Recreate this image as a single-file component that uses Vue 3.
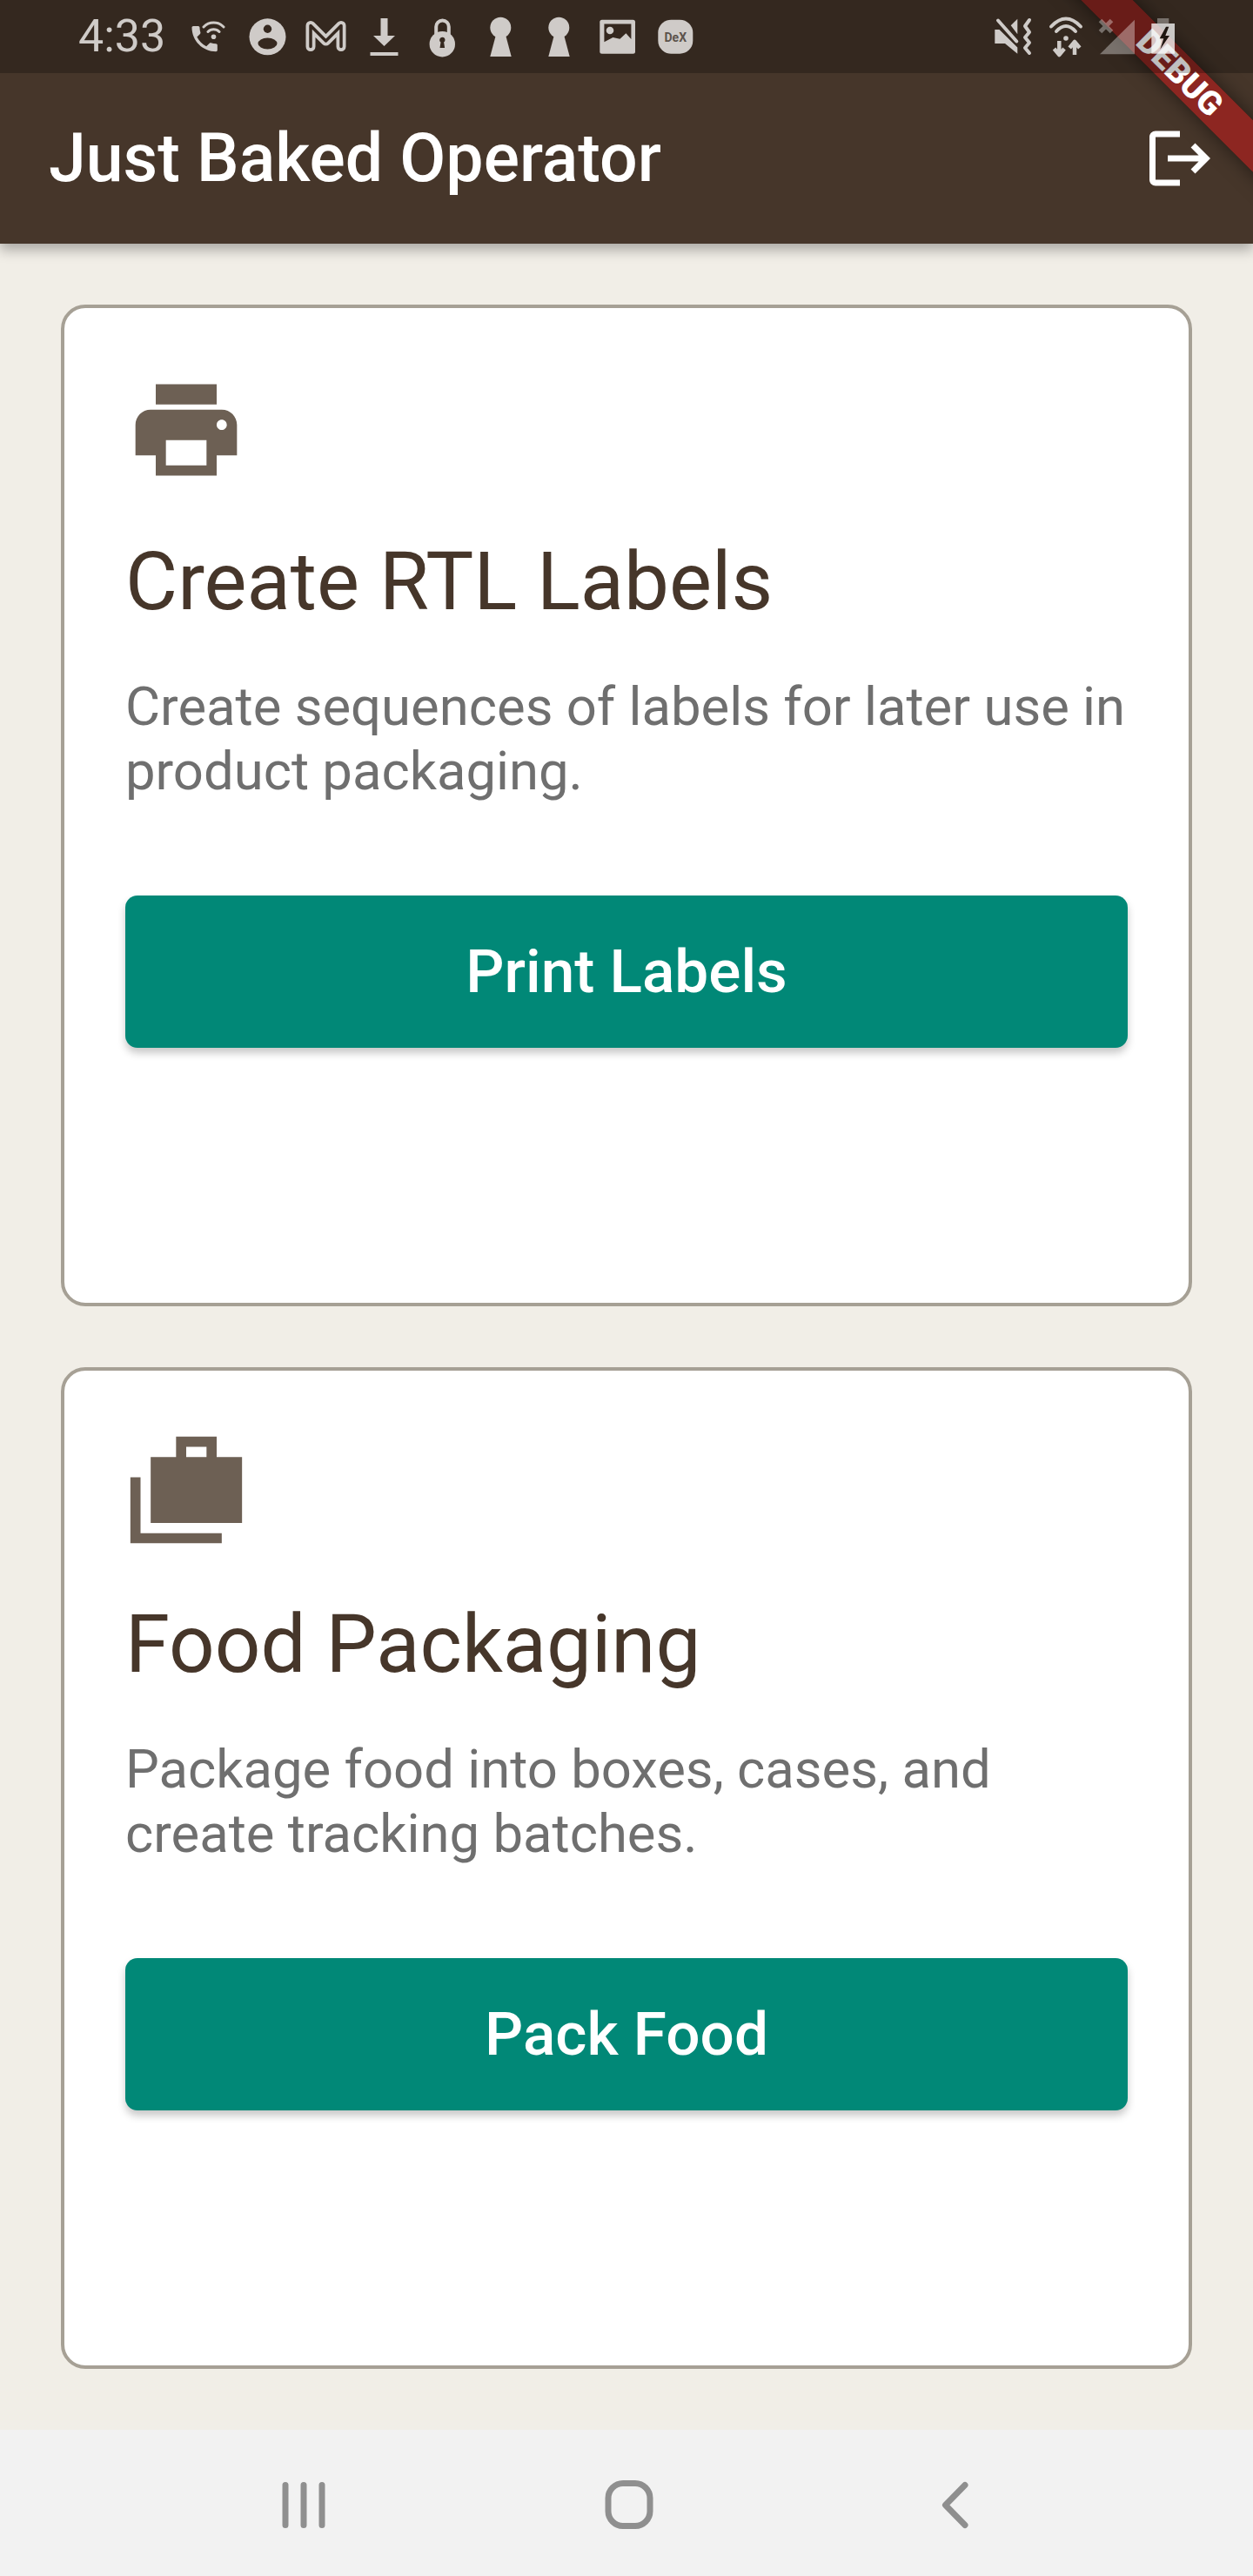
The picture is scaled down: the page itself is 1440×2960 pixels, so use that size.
<template>
  <div class="screen">
    <header class="app-bar">
      <h1 class="app-title">Just Baked Operator</h1>
      <button class="logout-button" title="Logout">
        <svg class="logout-icon" viewBox="0 0 24 24">
          <path d="M17 7l-1.41 1.41L18.17 11H8v2h10.17l-2.58 2.58L17 17l5-5zM4 5h8V3H4c-1.1 0-2 .9-2 2v14c0 1.1.9 2 2 2h8v-2H4V5z" />
        </svg>
      </button>
    </header>

    <main class="content">
      <section class="card">
        <svg class="card-icon" viewBox="0 0 24 24">
          <path d="M19 8H5c-1.66 0-3 1.34-3 3v6h4v4h12v-4h4v-6c0-1.66-1.34-3-3-3zm-3 11H8v-5h8v5zm3-7c-.55 0-1-.45-1-1s.45-1 1-1 1 .45 1 1-.45 1-1 1zm-1-9H6v4h12V3z" />
        </svg>
        <h2 class="card-title">Create RTL Labels</h2>
        <p class="card-text">Create sequences of labels for later use in product packaging.</p>
        <button class="card-button">Print Labels</button>
      </section>

      <section class="card">
        <svg class="card-icon" viewBox="0 0 24 24">
          <path fill-rule="evenodd" d="M1 9h2v11h16v2H1zM5 5h5V1h8v4h5v13H5zM12 3v2h4V3z" />
        </svg>
        <h2 class="card-title">Food Packaging</h2>
        <p class="card-text">Package food into boxes, cases, and create tracking batches.</p>
        <button class="card-button">Pack Food</button>
      </section>
    </main>

    <nav class="nav-bar">
      <svg class="nav-icon" viewBox="0 0 374 168">
        <path d="M166 63.500v46M187 63.500v46M208 63.500v46" />
      </svg>
      <svg class="nav-icon" viewBox="0 0 374 168">
        <rect x="163" y="61.500" width="48" height="49" rx="17" />
      </svg>
      <svg class="nav-icon" viewBox="0 0 374 168">
        <path d="M199 63.500l-22.500 23 22.500 23" />
      </svg>
    </nav>

    <div class="debug-banner"><span>DEBUG</span></div>

    <div class="status-bar">
      <span class="status-time">4:33</span>
      <div class="status-left">
        <svg class="status-slot" viewBox="0 0 67 64">
          <path transform="translate(8.600 15) scale(1.630)" d="M6.620 10.790c1.440 2.830 3.760 5.140 6.590 6.590l2.200-2.200c.27-.27.67-.36 1.020-.24 1.120.37 2.330.57 3.570.57.55 0 1 .45 1 1V20c0 .55-.45 1-1 1-9.390 0-17-7.610-17-17 0-.55.45-1 1-1h3.500c.55 0 1 .45 1 1 0 1.250.2 2.450.57 3.570.11.35.03.74-.25 1.020l-2.200 2.200z" />
          <path class="status-line" d="M27 21a16 16 0 0 1 23 0M32 26.500a9 9 0 0 1 13 0" />
          <circle cx="38.500" cy="32.300" r="2.800" />
        </svg>
        <svg class="status-slot" viewBox="0 0 67 64">
          <circle cx="33.500" cy="32.300" r="21" />
          <circle class="status-hole" cx="33.500" cy="23.300" r="4.700" />
          <ellipse class="status-hole" cx="33.500" cy="40" rx="11" ry="6.500" />
        </svg>
        <svg class="status-slot" viewBox="0 0 67 64">
          <path class="status-m" d="M16 43.500V19.500L33.500 37 51 19.500V43.500" />
          <path class="status-m-inner" d="M16 43.500V19.500L33.500 37 51 19.500V43.500" />
        </svg>
        <svg class="status-slot" viewBox="0 0 67 64">
          <path d="M29.500 11h8v20H46L33.500 43 21 31h8.500zM17.500 50h32v4h-32z" />
        </svg>
        <svg class="status-slot" viewBox="0 0 67 64">
          <path class="status-line wide" d="M26.200 32V20.800a7.300 7.300 0 0 1 14.600 0V32" />
          <circle cx="33.300" cy="40.700" r="14.700" />
          <path class="status-hole" d="M30.100 36a3.200 3.200 0 1 1 5 2.600l1 6.400h-5.600l1-6.400a3.200 3.200 0 0 1-1.400-2.600z" />
        </svg>
        <svg class="status-slot" viewBox="0 0 67 64">
          <circle cx="33.300" cy="21.700" r="12" />
          <path d="M28.500 28h10l7.200 27H21.300z" />
        </svg>
        <svg class="status-slot" viewBox="0 0 67 64">
          <circle cx="33.300" cy="21.700" r="12" />
          <path d="M28.500 28h10l7.200 27H21.300z" />
        </svg>
        <svg class="status-slot" viewBox="0 0 67 64">
          <rect x="13.300" y="12.700" width="40.700" height="39" rx="2.500" />
          <path class="status-hole" d="M18.400 17.500h31V35l-6-6.700-7 6.500-8-1.800-10 5.300z" />
          <circle cx="25" cy="25" r="4.300" />
        </svg>
        <svg class="status-slot" viewBox="0 0 67 64">
          <rect x="13.300" y="12.700" width="40" height="39" rx="15" />
          <text class="status-dex" x="33.300" y="37.500">DeX</text>
        </svg>
      </div>

      <div class="status-right">
        <svg class="status-mute" viewBox="0 0 50 64">
          <path d="M3.300 24H8.500L29.300 44.500V51.700L15 40H3.300zM21.700 19.300l7.600-7.600V29.300z" />
          <path class="status-line wide" d="M7 13.500l21.300 24M43 13l-5 7 5 7-5 6 5 6-5 6 5 6" />
        </svg>
        <svg class="status-wifi" viewBox="0 0 44 64">
          <path class="status-line wide" d="M4 20.500Q21 2.500 38 20.500M10 26Q21 14 32 26" />
          <circle cx="21" cy="34" r="2.800" />
          <path class="status-line thick" d="M13.300 37v15M7.500 46l5.800 7 5.800-7M31 53V39M25.200 45l5.800-7 5.800 7" />
        </svg>
        <svg class="status-signal" viewBox="0 0 44 64">
          <path class="status-dim" d="M42 12.700v39.600H2z" />
          <path class="status-dim-line" d="M2.500 13.500l13 13M15.500 13.500l-13 13" />
        </svg>
        <svg class="status-battery" viewBox="0 0 34 64">
          <path class="status-dim" d="M10 11h13.300v6H10z" />
          <path class="status-battery-body" d="M3.300 17H30v34.700H3.300z" />
          <path class="status-bolt" d="M20 20.700l-7.300 13.600h4.600l-4 12.400L24 31h-4.700l4-10.300z" />
        </svg>
      </div>
    </div>
  </div>
</template>

<script setup>
</script>

<style>
html,
body {
  margin: 0;
  background: #f1eee7;
}
</style>

<style scoped>
.screen {
  position: relative;
  display: flex;
  flex-direction: column;
  width: 1440px;
  height: 2960px;
  overflow: hidden;
  background: #f1eee7;
  font-family: Roboto, "Liberation Sans", sans-serif;
}

.app-bar {
  display: flex;
  align-items: center;
  justify-content: space-between;
  box-sizing: border-box;
  height: 280px;
  padding: 84px 0 0 56px;
  background: #46362a;
  box-shadow: 0 7px 14px rgba(0, 0, 0, 0.3);
  z-index: 1;
}

.app-title {
  margin: 0;
  color: #fff;
  font-size: 77px;
  font-weight: 500;
}

.logout-button {
  display: flex;
  align-items: center;
  justify-content: center;
  width: 168px;
  height: 168px;
  padding: 0;
  border: none;
  background: none;
}

.logout-icon {
  width: 84px;
  height: 84px;
  fill: #fff;
}

.content {
  flex: 1;
  display: flex;
  flex-direction: column;
  gap: 70px;
  padding: 70px;
  min-height: 0;
}

.card {
  flex: 1;
  box-sizing: border-box;
  padding: 70px;
  border: 4px solid #a6a095;
  border-radius: 28px;
  background: #fff;
}

.card-icon {
  display: block;
  width: 140px;
  height: 140px;
  fill: #6d6054;
}

.card-title {
  margin: 51px 0 0;
  color: #46362a;
  font-size: 92.400px;
  font-weight: 400;
  line-height: 108px;
}

.card-text {
  margin: 52px 0 0;
  color: #6f6f6f;
  font-size: 61.600px;
  line-height: 74px;
}

.card-button {
  display: block;
  width: 100%;
  height: 175px;
  margin-top: 106px;
  border: none;
  border-radius: 14px;
  background: #018877;
  box-shadow: 0 6px 10px rgba(0, 0, 0, 0.22);
  color: #fff;
  font-family: inherit;
  font-size: 69.300px;
  font-weight: 500;
}

.nav-bar {
  display: flex;
  box-sizing: border-box;
  height: 168px;
  padding-left: 161.500px;
  background: #f2f2f2;
}

.nav-icon {
  flex: none;
  width: 374px;
  height: 168px;
  fill: none;
  stroke: #8f8f8f;
  stroke-width: 7;
  stroke-linecap: round;
  stroke-linejoin: round;
}

.debug-banner {
  position: absolute;
  top: 63px;
  left: 1106px;
  display: flex;
  align-items: center;
  justify-content: center;
  width: 500px;
  height: 42px;
  background: rgba(183, 28, 28, 0.63);
  box-shadow: 0 0 21px rgba(0, 0, 0, 0.5);
  color: #fff;
  font-size: 38px;
  font-weight: 900;
  line-height: 42px;
  transform: rotate(45deg);
  z-index: 2;
}

.status-bar {
  position: absolute;
  top: 0;
  left: 0;
  display: flex;
  align-items: flex-start;
  box-sizing: border-box;
  width: 100%;
  height: 84px;
  padding: 10px 86px 0 90px;
  background: rgba(0, 0, 0, 0.25);
  color: #cfcbc8;
  z-index: 3;
}

.status-time {
  width: 116.500px;
  font-size: 52px;
  line-height: 64px;
}

.status-left {
  display: flex;
  flex: 1;
}

.status-right {
  display: flex;
  gap: 14px;
}

svg[class^="status-"] {
  height: 64px;
  fill: #cfcbc8;
  overflow: visible;
}

.status-slot {
  width: 67px;
}

.status-mute {
  width: 50px;
}

.status-wifi,
.status-signal {
  width: 44px;
}

.status-battery {
  width: 34px;
}

.status-hole {
  fill: #35281f;
}

.status-line {
  fill: none;
  stroke: #cfcbc8;
  stroke-width: 3;
  stroke-linecap: round;
  stroke-linejoin: round;
}

.status-line.wide {
  stroke-width: 4;
}

.status-line.thick {
  stroke-width: 4.500;
  stroke-linecap: butt;
}

.status-m {
  fill: none;
  stroke: #cfcbc8;
  stroke-width: 11;
  stroke-linecap: round;
  stroke-linejoin: round;
}

.status-m-inner {
  fill: none;
  stroke: #35281f;
  stroke-width: 3.500;
  stroke-linecap: round;
  stroke-linejoin: round;
}

.status-dex {
  fill: #5c534c;
  font-size: 14px;
  font-weight: 700;
  text-anchor: middle;
}

.status-dim {
  fill: rgba(255, 255, 255, 0.35);
}

.status-dim-line {
  fill: none;
  stroke: rgba(255, 255, 255, 0.35);
  stroke-width: 5;
}

.status-battery-body {
  fill: rgba(255, 255, 255, 0.75);
}

.status-bolt {
  fill: #1f1510;
}
</style>
